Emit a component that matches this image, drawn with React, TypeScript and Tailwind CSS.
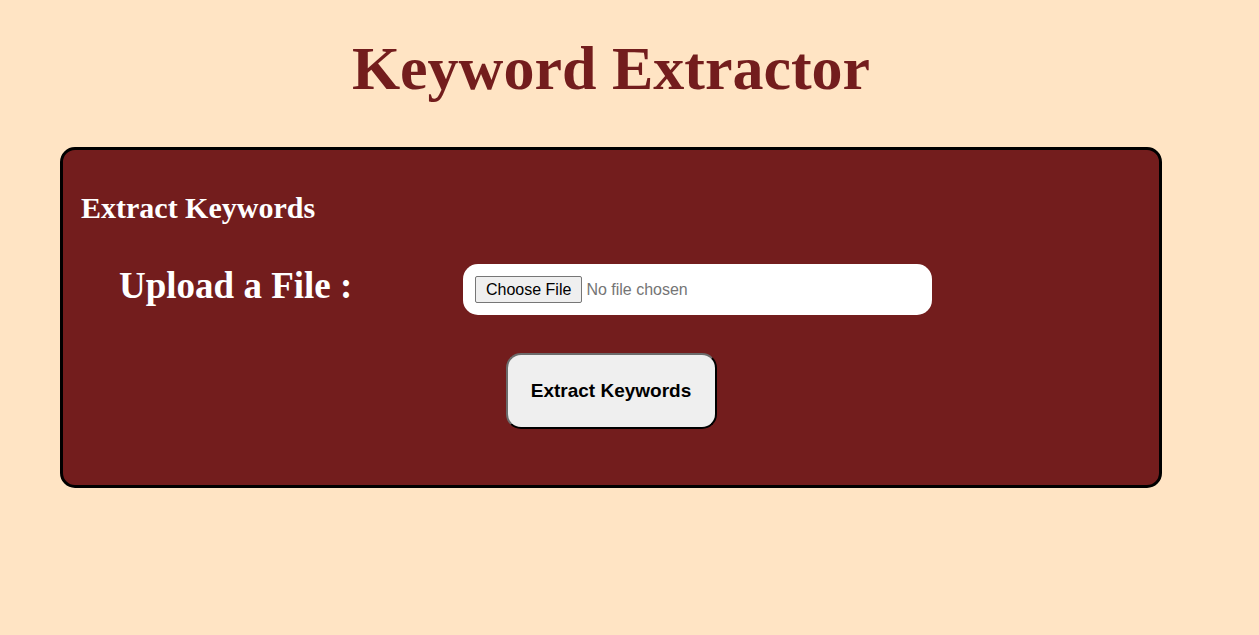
export default function App() {
  return (
    <div className="min-h-[635px] w-full bg-[#ffe4c4] font-['Liberation_Serif',serif]">
      <div className="ml-[60px] w-[1102px] pt-[33px]">
        <h1 className="text-center text-[62px] font-bold leading-[70px] text-[#731d1d]">
          Keyword Extractor
        </h1>

        <div className="mt-[44px] flex h-[341px] flex-col rounded-[15px] border-[3px] border-black bg-[#731d1d] px-[18px] pt-[41px]">
          <h2 className="text-[30px] font-bold leading-[34px] text-white">Extract Keywords</h2>

          <div className="mt-[39px] flex items-start">
            <label
              htmlFor="file"
              className="ml-[38px] mt-[2px] w-[344px] text-[37px] font-bold leading-[40px] text-white"
            >
              Upload a File :
            </label>
            <input
              id="file"
              type="file"
              className="w-[469px] rounded-[15px] bg-white px-[12px] py-[12px] font-['Liberation_Sans',Arial,sans-serif] text-[16px] leading-[19px] text-[#757575] file:mr-[4px] file:h-[27px] file:rounded-[2px] file:border file:border-[#767676] file:bg-[#efefef] file:px-[10px] file:text-[16px] file:text-black"
            />
          </div>

          <div className="mt-[38px] flex justify-center">
            <button className="h-[76px] w-[211px] rounded-[15px] border-2 border-t-[#6b6b6b] border-l-[#6b6b6b] border-r-black border-b-black bg-[#efefef] font-['Liberation_Sans',Arial,sans-serif] text-[19px] font-bold text-black">
              Extract Keywords
            </button>
          </div>
        </div>
      </div>
    </div>
  );
}
